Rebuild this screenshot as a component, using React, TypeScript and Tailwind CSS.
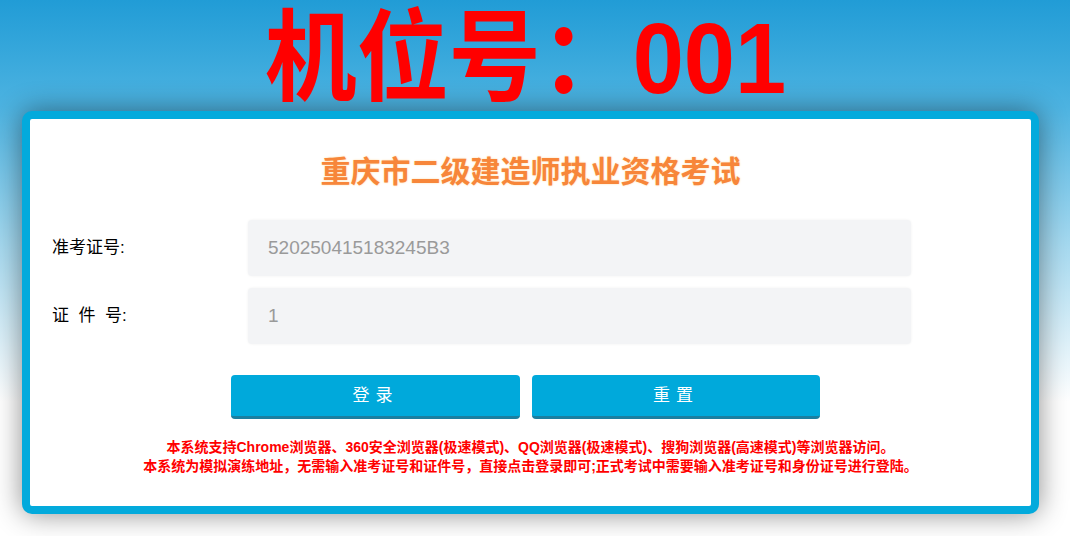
export default function App() {
    return (
        <div
            className="h-[536px] w-full overflow-hidden bg-[linear-gradient(180deg,#219cd6_0%,#4db3e1_20%,#a3d8ef_45%,#ffffff_75%)]"
            style={{ fontFamily: '"Liberation Sans", "Noto Sans CJK SC", sans-serif' }}
        >
            {/* 机位号 */}
            <div className="h-[111px] flex items-center justify-center pr-[20px]">
                <h1 className="text-[100px] leading-none font-bold text-[#ff0000] scale-x-[0.92] pt-[4px]">
                    机位号：001
                </h1>
            </div>

            {/* Card */}
            <div className="ml-[22px] w-[1017px] h-[403px] rounded-[10px] border-[8px] border-[#03aadc] bg-white shadow-[0_0_28px_rgba(0,0,0,0.45)]">
                <h2 className="mt-[33px] text-center text-[30px] leading-[40px] font-bold text-[#f7863a] [text-shadow:0_0_2px_#ffd9a0]">
                    重庆市二级建造师执业资格考试
                </h2>

                <div className="mt-[28px] flex flex-col gap-[12px]">
                    <div className="flex items-center">
                        <label className="w-[218px] pl-[22px] text-[17px] text-black">准考证号:</label>
                        <div className="w-[663px] h-[56px] flex items-center pl-[20px] rounded-[4px] bg-[#f3f4f6] shadow-[0_0_3px_rgba(0,0,0,0.06)] text-[19px] text-[#9a9a9a]">
                            520250415183245B3
                        </div>
                    </div>
                    <div className="flex items-center">
                        <label className="w-[218px] pl-[22px] text-[17px] text-black">证&nbsp;&nbsp;件&nbsp;&nbsp;号:</label>
                        <div className="w-[663px] h-[56px] flex items-center pl-[20px] rounded-[4px] bg-[#f3f4f6] shadow-[0_0_3px_rgba(0,0,0,0.06)] text-[19px] text-[#9a9a9a]">
                            1
                        </div>
                    </div>
                </div>

                <div className="mt-[31px] flex justify-center gap-[12px] pr-[10px]">
                    <button className="w-[289px] h-[44px] rounded-[4px] bg-[#00a9db] border-b-[3px] border-[#1b7fa0] text-white text-[17px] tracking-[6px]">
                        登录
                    </button>
                    <button className="w-[288px] h-[44px] rounded-[4px] bg-[#00a9db] border-b-[3px] border-[#1b7fa0] text-white text-[17px] tracking-[6px]">
                        重置
                    </button>
                </div>

                <div className="mt-[19px] text-center text-[14px] leading-[19px] font-bold text-[#ff0000]">
                    <p>本系统支持Chrome浏览器、360安全浏览器(极速模式)、QQ浏览器(极速模式)、搜狗浏览器(高速模式)等浏览器访问。</p>
                    <p>本系统为模拟演练地址，无需输入准考证号和证件号，直接点击登录即可;正式考试中需要输入准考证号和身份证号进行登陆。</p>
                </div>
            </div>
        </div>
    );
}
